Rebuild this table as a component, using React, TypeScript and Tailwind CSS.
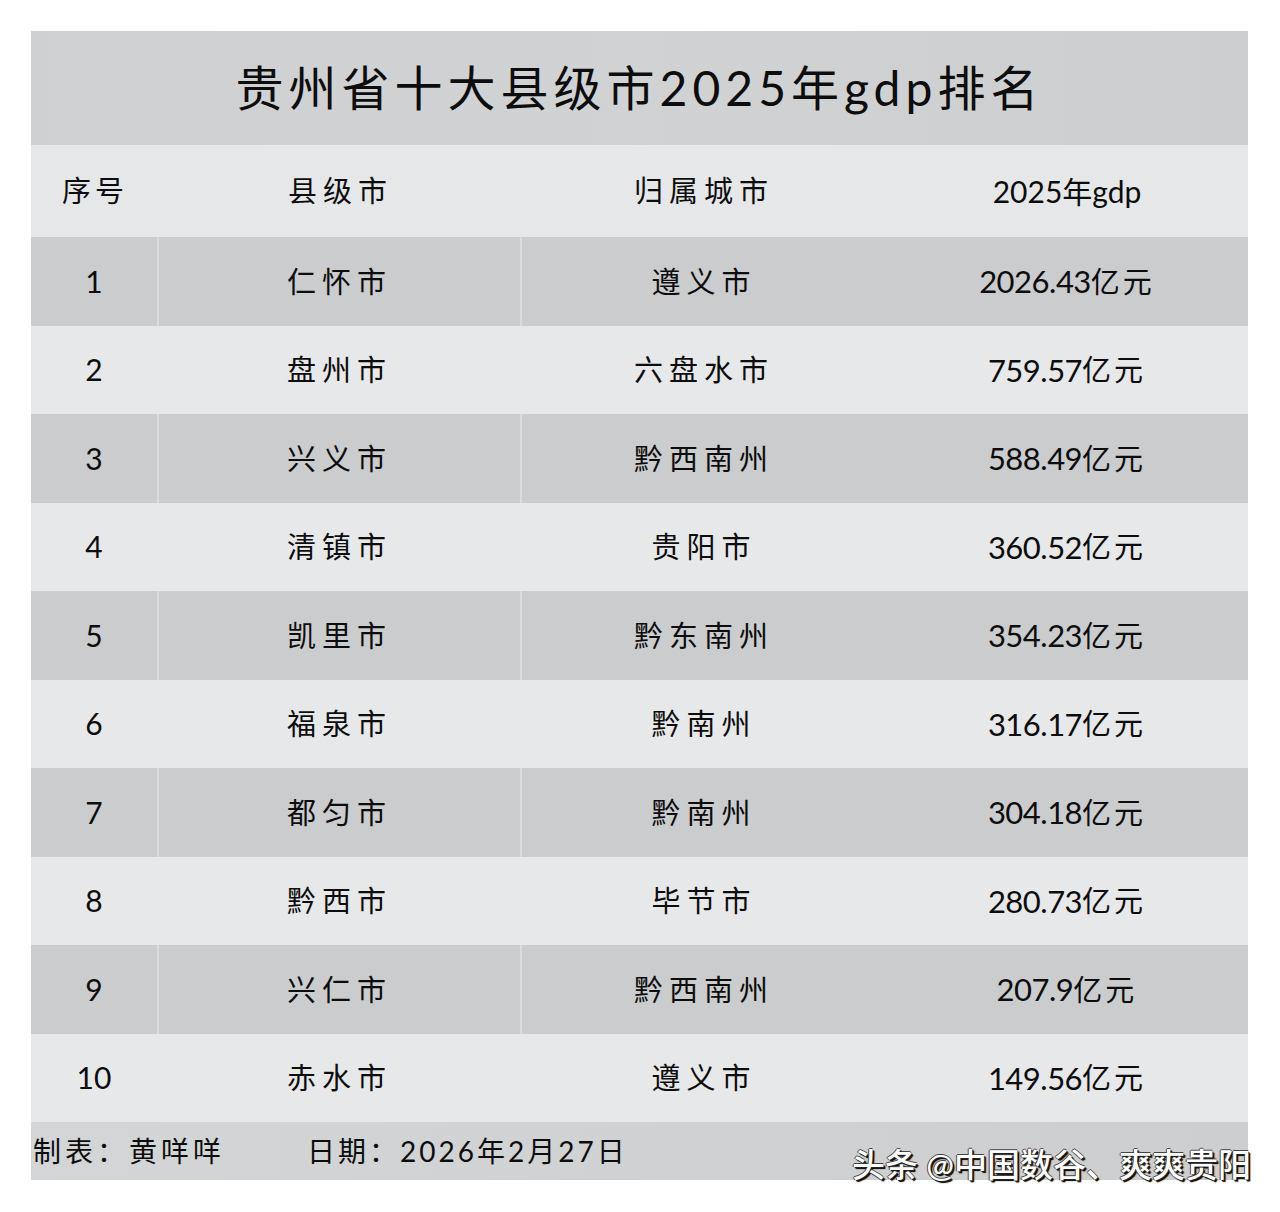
import React from "react";

const rows = [
  { no: "1", county: "仁怀市", city: "遵义市", gdp: "2026.43" },
  { no: "2", county: "盘州市", city: "六盘水市", gdp: "759.57" },
  { no: "3", county: "兴义市", city: "黔西南州", gdp: "588.49" },
  { no: "4", county: "清镇市", city: "贵阳市", gdp: "360.52" },
  { no: "5", county: "凯里市", city: "黔东南州", gdp: "354.23" },
  { no: "6", county: "福泉市", city: "黔南州", gdp: "316.17" },
  { no: "7", county: "都匀市", city: "黔南州", gdp: "304.18" },
  { no: "8", county: "黔西市", city: "毕节市", gdp: "280.73" },
  { no: "9", county: "兴仁市", city: "黔西南州", gdp: "207.9" },
  { no: "10", county: "赤水市", city: "遵义市", gdp: "149.56" },
];

const font = "font-['Lato','Noto_Sans_CJK_SC',sans-serif]";

function Row({ r, i }: { r: (typeof rows)[number]; i: number }) {
  const dark = i % 2 === 0;
  const line = dark ? "border-r-2 border-[#dadbdc]" : "border-r-2 border-transparent";
  return (
    <div className={`flex h-[88.5px] items-center text-[29px] text-[#0d0d0d] ${dark ? "bg-[#cbcccd]" : "bg-[#e7e8e9]"}`}>
      <div className={`flex h-full w-[128px] items-center justify-center text-[30px] ${line}`}>{r.no}</div>
      <div className={`flex h-full w-[363px] items-center justify-center tracking-[6px] ${line}`}>{r.county}</div>
      <div className="flex h-full w-[364px] items-center justify-center tracking-[6px]">{r.city}</div>
      <div className="flex h-full flex-1 items-center justify-center">
        <span className="text-[31px] tracking-[-0.5px]">{r.gdp}</span>
        <span className="tracking-[3px]">亿元</span>
      </div>
    </div>
  );
}

export default function App() {
  return (
    <div className={`relative h-[1212px] w-[1280px] bg-white pt-[31px] ${font}`}>
      <div className="ml-[31px] w-[1217px]">
        <div className="flex h-[114px] items-center justify-center bg-gradient-to-r from-[#cfd0d2] via-[#d1d2d4] to-[#cdced0] text-[48px] font-normal tracking-[5px] text-[#0d0d0d]">
          贵州省十大县级市2025年gdp排名
        </div>
        <div className="flex h-[92px] items-center bg-[#e6e7e8] text-[29px] text-[#0d0d0d]">
          <div className="flex w-[128px] justify-center tracking-[4px]">序号</div>
          <div className="flex w-[363px] justify-center tracking-[6px]">县级市</div>
          <div className="flex w-[364px] justify-center tracking-[6px]">归属城市</div>
          <div className="flex flex-1 justify-center text-[30px]">2025年gdp</div>
        </div>
        {rows.map((r, i) => (
          <Row key={r.no} r={r} i={i} />
        ))}
        <div className="flex h-[58px] items-center bg-gradient-to-r from-[#d4d5d6] to-[#cdced0] text-[28px] text-[#0d0d0d]">
          <span className="pl-[2px] tracking-[4px]">制表：黄咩咩</span>
          <span className="ml-[82px] tracking-[3px]">日期：2026年2月27日</span>
        </div>
      </div>
      <div className="absolute left-[852px] top-[1140px] text-[33px] font-medium text-white [text-shadow:1px_1px_0_#222,-1px_0_0_#444,0_-1px_0_#444,2px_2px_1px_#000]">
        头条 @中国数谷、爽爽贵阳
      </div>
    </div>
  );
}
